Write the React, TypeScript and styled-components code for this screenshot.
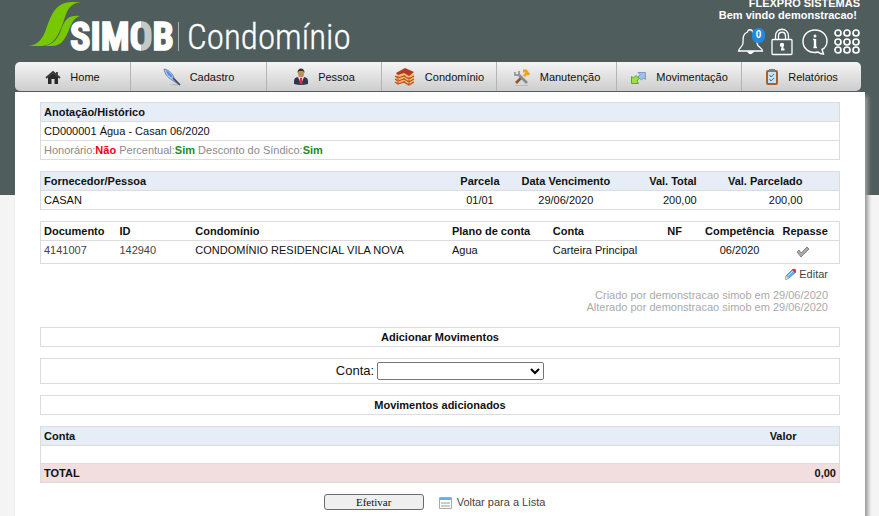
import React from "react";
import styled, { createGlobalStyle } from "styled-components";

const GlobalStyle = createGlobalStyle`
  * { box-sizing: border-box; }
  body {
    margin: 0;
    background: #f4f4f4 linear-gradient(#4f5d5d, #4f5d5d) 0 0 / 100% 195px no-repeat;
    color: #111;
    font: 11px/12px "Liberation Sans", Arial, sans-serif;
  }
  a { color: #444; text-decoration: none; }
`;

const Page = styled.div`
  min-width: 780px;
  padding: 0 14px 0 15px;
`;

const Header = styled.header`
  display: flex;
  justify-content: space-between;
  align-items: flex-end;
  height: 62px;
  padding: 0 5px 6px 12px;
  overflow: hidden;
`;

const LogoLink = styled.a`
  display: block;
  height: 56px;
`;

const Account = styled.div`
  display: flex;
  flex-direction: column;
  align-items: flex-end;
  gap: 7px;
  color: #fff;
  font-weight: bold;
`;

const Greeting = styled.div`
  text-align: right;
  white-space: pre;
`;

const Tools = styled.div`
  display: flex;
  gap: 5px;
`;

const ToolButton = styled.button`
  position: relative;
  display: block;
  width: 27px;
  height: 28px;
  padding: 0;
  border: 0;
  background: none;
  color: #fff;
  cursor: pointer;
`;

const Badge = styled.span`
  position: absolute;
  top: 0;
  right: -1px;
  width: 13px;
  height: 15px;
  border-radius: 6px;
  background: #2389dc;
  font: bold 10px/14px "Liberation Sans", Arial, sans-serif;
  text-align: center;
`;

const Nav = styled.nav`
  display: grid;
  grid-template-columns: 115fr 136fr 115fr 115fr 120fr 125fr 120fr;
  height: 29px;
  margin: 0 4px 1px 0;
  border-radius: 5px;
  background: linear-gradient(#f5f5f5, #cdcdcd);
`;

const NavItem = styled.a`
  display: flex;
  align-items: center;
  justify-content: center;
  gap: 9px;
  color: #111;
  & + & { border-left: 1px solid #b5b5b5; }
`;

const Main = styled.main`
  min-height: 440px;
  padding: 10px 25px;
  background: #fff;
  box-shadow: 3px 4px 4px #999;
`;

const Table = styled.table`
  width: 100%;
  margin-bottom: 11px;
  border: 1px solid #dcdcdc;
  border-collapse: collapse;
  table-layout: fixed;
`;

type Align = "left" | "center" | "right";

const Row = styled.tr<{ $tone?: "blue" | "pink" }>`
  border: 1px solid #dcdcdc;
  background: ${(p) => (p.$tone === "blue" ? "#e6edf6" : p.$tone === "pink" ? "#f2dede" : "#fff")};
`;

const Th = styled.th<{ $align?: Align }>`
  padding: 3px;
  text-align: ${(p) => p.$align ?? "left"};
  white-space: nowrap;
`;

const Td = styled.td<{ $align?: Align; $muted?: boolean }>`
  height: 19px;
  padding: 3px;
  text-align: ${(p) => p.$align ?? "left"};
  vertical-align: top;
  white-space: nowrap;
  color: ${(p) => (p.$muted ? "#8a8a8a" : "inherit")};
`;

const SpacerTd = styled.td`
  height: 18px;
  padding: 0;
`;

const Flag = styled.b<{ $on?: boolean }>`
  color: ${(p) => (p.$on ? "#228b22" : "#f00020")};
`;

const CheckTd = styled(Td)`
  height: 23px;
  padding: 5px 3px 0;
`;

const EntryTable = styled(Table)`
  margin-bottom: 4px;
`;

const EditBar = styled.div`
  display: flex;
  justify-content: flex-end;
  padding: 0 12px;
`;

const IconLink = styled.a<{ $gap: number }>`
  display: flex;
  align-items: center;
  gap: ${(p) => p.$gap}px;
`;

const Audit = styled.p`
  margin: 9px 12px 14px;
  color: #aaa;
  text-align: right;
`;

const SectionTitle = styled.h2`
  margin: 0 0 11px;
  padding: 4px;
  border: 1px solid #dcdcdc;
  font-size: 11px;
  line-height: 10px;
  text-align: center;
`;

const AccountField = styled.div`
  display: flex;
  align-items: center;
  justify-content: center;
  gap: 3px;
  height: 26px;
  margin-bottom: 11px;
  border: 1px solid #dcdcdc;
  font-size: 13px;
`;

const Select = styled.select`
  width: 167px;
  height: 18px;
  border: 1px solid #767676;
  border-radius: 2px;
  background: #fff;
`;

const Actions = styled.div`
  display: flex;
  justify-content: center;
  gap: 15px;
  padding-right: 11px;
`;

const SubmitButton = styled.button`
  width: 100px;
  height: 16px;
  padding: 0;
  border: 1px solid #6b6b6b;
  border-radius: 3px;
  background: #efefef;
  color: #111;
  font: 11px/14px "Liberation Serif", "Times New Roman", serif;
`;

function Logo() {
  return (
    <svg width="330" height="56" viewBox="27 0 330 56" role="img" aria-label="SIMOB Condomínio">
      <defs>
        <linearGradient id="ring" gradientUnits="userSpaceOnUse" x1="130" x2="152" y1="0" y2="0">
          <stop offset=".5" stopColor="#fff" />
          <stop offset=".5" stopColor="#c4c8c8" />
        </linearGradient>
      </defs>
      <path d="M28 46C38 45 42 39 45 32C50 20 53 2 72 2H81C67 4 67 13 63 23C58 36 54 45 42 46Z" fill="#78c800" />
      <path d="M45 46C54 44 58 38 61 30C65 19 69 15 80 16C73 18 71 25 68 32C64 41 60 46 52 46Z" fill="#78c800" />
      <text x="70" y="50" fill="#fff" stroke="#fff" strokeWidth="1.500" fontFamily="Roboto Condensed, Liberation Sans, sans-serif" fontWeight="700" fontSize="38">
        SIM<tspan fill="url(#ring)" stroke="url(#ring)">O</tspan>B
      </text>
      <path d="M178.500 22V51" stroke="#a9b0b0" />
      <text x="187" y="49" fill="#fff" fontFamily="Roboto Condensed, Roboto, sans-serif" fontWeight="300" fontSize="35" stroke="#fff" strokeWidth=".3">Condomínio</text>
    </svg>
  );
}

function BellIcon() {
  return (
    <svg width="27" height="28" viewBox="0 0 27 28" fill="none" stroke="#fff" strokeWidth="1.3">
      <path d="M10.500 4C10.500 1 15.500 1 15.500 4C20 6 20 10 20 15C20 19 25.500 20 25.500 23H1.500C1.500 20 6 19 6 15C6 9 6 6 10.500 4Z" />
      <path d="M11 24Q13 27 16 24Z" fill="#fff" />
    </svg>
  );
}

function LockIcon() {
  return (
    <svg width="27" height="28" viewBox="0 0 27 28" fill="none" stroke="#fff" strokeWidth="1.3">
      <rect x="3" y="11.500" width="20" height="15" rx="1" />
      <path d="M6.500 11V8C6.500-1 19.500-1 19.500 8V11M9.500 11V8C9.500 3 16.500 3 16.500 8V11" />
      <circle cx="13" cy="17" r="1.500" fill="#fff" />
      <path d="M13.500 18V22M12 21.500H15.500" strokeWidth="1.800" />
    </svg>
  );
}

function InfoIcon() {
  return (
    <svg width="27" height="28" viewBox="0 0 27 28" fill="none" stroke="#fff" strokeWidth="1.400">
      <path d="M17 24C9 26 2 21 2 13.500C2 7 7 2 14 2C21 2 26 7 26 13C26 17 24 20 21 21.500L22.500 26Q19 26 17 24Z" />
      <circle cx="14" cy="8" r="1.500" fill="#fff" stroke="none" />
      <path d="M14 11V20" strokeWidth="2.400" />
      <path d="M12 11.500H14M12.500 19.500H16" />
    </svg>
  );
}

function GridIcon() {
  return (
    <svg width="27" height="28" viewBox="0 0 27 28" fill="none" stroke="#fff" strokeWidth="1.700">
      {[5, 14, 22].map((cy) => [5, 14, 23].map((cx) => <circle key={`${cx}-${cy}`} cx={cx} cy={cy} r="3" />))}
    </svg>
  );
}

function HomeIcon() {
  return (
    <svg width="16" height="20" viewBox="0 0 16 20">
      <path d="M3 10L8 6L13 10V17H9.500V12H6.500V17H3Z" fill="#292929" />
      <path d="M1 11L8 5L15 11M12 5V8" fill="none" stroke="#383838" strokeWidth="1.800" />
    </svg>
  );
}

function PenIcon() {
  return (
    <svg width="18" height="20" viewBox="0 0 18 20">
      <path d="M6 17L16 17L13 19Z" fill="#aaa" opacity=".6" />
      <path d="M1 2C6 3 10 7 11 11L17 18L9 13C4 10 2 7 1 2Z" fill="#b8cbe6" stroke="#6a82ab" />
      <path d="M3 3Q8 6 10 11Q4 9 3 3Z" fill="#4b8cf2" />
      <path d="M10 11L17 18" stroke="#3d4560" strokeWidth="1.500" />
    </svg>
  );
}

function PersonIcon() {
  return (
    <svg width="16" height="20" viewBox="0 0 16 20">
      <path d="M1 17V14Q1 10 6 10H10Q15 10 15 14V17Q8 19 1 17Z" fill="#32364d" />
      <path d="M5 10H11L8 17Z" fill="#e9eef5" />
      <path d="M7 11H9L9.500 17H6.500Z" fill="#e12a32" />
      <ellipse cx="8" cy="6.500" rx="3" ry="4" fill="#c38c5b" />
      <path d="M4.500 6C4 0 12 0 11.500 6L10 4H6Z" fill="#3e3029" />
    </svg>
  );
}

function BuildingIcon() {
  return (
    <svg width="22" height="22" viewBox="0 0 22 22">
      <path d="M2 8L11 4L20 8V17L14 20L9 17L2 18Z" fill="#efc272" />
      <path d="M2 7L11 2L20 6L15 10L10 7L4 9Z" fill="#b23a20" />
      <path d="M1 10L4 12L10 10L15 13L20 10M1 13L4 15L10 13L15 16L20 13M1 16L4 18L10 16L15 19L20 16" fill="none" stroke="#c2502c" strokeWidth="1.300" />
      <path d="M4 10V18M10 9V18M15 11V20" stroke="#8e4a21" strokeDasharray="1 2" />
    </svg>
  );
}

function ToolsIcon() {
  return (
    <svg width="18" height="20" viewBox="0 0 18 20" fill="none">
      <path d="M2 18.500H15" stroke="#bbb" />
      <path d="M3 16L9 10" stroke="#8b562c" strokeWidth="2.600" />
      <path d="M5 7L14 16" stroke="#8b8b8b" strokeWidth="2.600" />
      <path d="M2 5V8H6V4" stroke="#999" strokeWidth="1.800" />
      <path d="M10 4H13L16 8M11 9L14 6" stroke="#efa31d" strokeWidth="2.800" />
    </svg>
  );
}

function TransferIcon() {
  return (
    <svg width="17" height="20" viewBox="0 0 17 20">
      <path d="M8 5.500H15.500V12.500L13.500 11L11.500 13L8 10L10 7.500Z" fill="#a4bdea" stroke="#7d98d2" />
      <path d="M1.500 9.500L3.500 11L6 8.500L9 11.500L7 14L8.500 16.500H1.500Z" fill="#9be33f" stroke="#5ca62c" />
    </svg>
  );
}

function ClipboardIcon() {
  return (
    <svg width="14" height="20" viewBox="0 0 14 20">
      <rect x="2" y="4" width="10" height="13" rx="1" fill="#c5e2f4" stroke="#a85f29" strokeWidth="2" />
      <path d="M4 2H10V5H4Z" fill="#758281" />
      <path d="M4.500 8L6 10L9 7M4.500 12L6 14L9 11" fill="none" stroke="#566c7b" />
    </svg>
  );
}

function CheckIcon() {
  return (
    <svg width="14" height="12" viewBox="0 0 14 12" aria-label="Sim" role="img">
      <path d="M1 6L3 4L5 7L11 1L13 3L5 11Z" fill="#aaa" stroke="#888" />
    </svg>
  );
}

function PencilIcon() {
  return (
    <svg width="12" height="12" viewBox="0 0 12 12">
      <path d="M1 8L8 1L11 4L4 10L0 12Z" fill="#66aee6" stroke="#4774a4" strokeWidth=".7" />
      <path d="M7 2L8 1Q10 0 11 2Q12 3 10 5Z" fill="#d93642" />
      <path d="M1 8L4 10L0 12Z" fill="#d7d7d7" />
      <path d="M3 8L8 3" stroke="#bde4ff" />
    </svg>
  );
}

function ListIcon() {
  return (
    <svg width="13" height="14" viewBox="0 0 13 14">
      <path d="M.5 2.500H12.500V13.500H.5Z" fill="#fff" stroke="#aaa" />
      <path d="M1 3H12V5H1Z" fill="#62b2e5" />
      <path d="M2 7H11V9H2ZM2 10H11V12H2Z" fill="#ccc" />
    </svg>
  );
}

const sections = [
  { label: "Home", Icon: HomeIcon },
  { label: "Cadastro", Icon: PenIcon },
  { label: "Pessoa", Icon: PersonIcon },
  { label: "Condomínio", Icon: BuildingIcon },
  { label: "Manutenção", Icon: ToolsIcon },
  { label: "Movimentação", Icon: TransferIcon },
  { label: "Relatórios", Icon: ClipboardIcon },
];

const Col = styled.col<{ $share?: number }>`
  width: ${(p) => (p.$share ? `${p.$share}%` : "auto")};
`;

function Columns({ shares }: { shares: number[] }) {
  return (
    <colgroup>
      {shares.map((share, i) => <Col key={i} $share={share} />)}
      <Col />
    </colgroup>
  );
}

export default function App() {
  return (
    <Page>
      <GlobalStyle />
      <Header>
        <LogoLink href="#"><Logo /></LogoLink>
        <Account>
          <Greeting>{"FLEXPRO SISTEMAS\nBem vindo demonstracao! "}</Greeting>
          <Tools>
            <ToolButton aria-label="Notificações"><BellIcon /><Badge>0</Badge></ToolButton>
            <ToolButton aria-label="Senha"><LockIcon /></ToolButton>
            <ToolButton aria-label="Informações"><InfoIcon /></ToolButton>
            <ToolButton aria-label="Aplicativos"><GridIcon /></ToolButton>
          </Tools>
        </Account>
      </Header>

      <Nav>
        {sections.map(({ label, Icon }) => (
          <NavItem href="#" key={label}><Icon />{label}</NavItem>
        ))}
      </Nav>

      <Main>
        <Table>
          <thead><Row $tone="blue"><Th>Anotação/Histórico</Th></Row></thead>
          <tbody>
            <Row><Td>CD000001 Água - Casan 06/2020</Td></Row>
            <Row>
              <Td $muted>
                Honorário:<Flag>Não</Flag> Percentual:<Flag $on>Sim</Flag> Desconto do Síndico:<Flag $on>Sim</Flag>
              </Td>
            </Row>
          </tbody>
        </Table>

        <Table>
          <Columns shares={[52, 6, 15.5, 9, 13.25]} />
          <thead>
            <Row $tone="blue">
              <Th>Fornecedor/Pessoa</Th>
              <Th $align="center">Parcela</Th>
              <Th $align="center">Data Vencimento</Th>
              <Th $align="right">Val. Total</Th>
              <Th $align="right">Val. Parcelado</Th>
              <Th />
            </Row>
          </thead>
          <tbody>
            <Row>
              <Td>CASAN</Td>
              <Td $align="center">01/01</Td>
              <Td $align="center">29/06/2020</Td>
              <Td $align="right">200,00</Td>
              <Td $align="right">200,00</Td>
              <Td />
            </Row>
          </tbody>
        </Table>

        <EntryTable>
          <Columns shares={[9.5, 9.5, 32.125, 12.625, 12.5, 6.25, 10, 6]} />
          <thead>
            <Row>
              <Th>Documento</Th>
              <Th>ID</Th>
              <Th>Condomínio</Th>
              <Th>Plano de conta</Th>
              <Th>Conta</Th>
              <Th $align="center">NF</Th>
              <Th $align="center">Competência</Th>
              <Th $align="center">Repasse</Th>
              <Th />
            </Row>
          </thead>
          <tbody>
            <Row>
              <Td><a href="#">4141007</a></Td>
              <Td><a href="#">142940</a></Td>
              <Td>CONDOMÍNIO RESIDENCIAL VILA NOVA</Td>
              <Td>Agua</Td>
              <Td>Carteira Principal</Td>
              <Td />
              <Td $align="center">06/2020</Td>
              <CheckTd $align="center"><CheckIcon /></CheckTd>
              <Td />
            </Row>
          </tbody>
        </EntryTable>

        <EditBar><IconLink href="#" $gap={2}><PencilIcon />Editar</IconLink></EditBar>
        <Audit>
          Criado por demonstracao simob em 29/06/2020<br />
          Alterado por demonstracao simob em 29/06/2020
        </Audit>

        <SectionTitle>Adicionar Movimentos</SectionTitle>
        <AccountField>
          <label htmlFor="conta">Conta:</label>
          <Select id="conta" defaultValue=""><option value="" /></Select>
        </AccountField>
        <SectionTitle>Movimentos adicionados</SectionTitle>

        <Table>
          <Columns shares={[85, 10]} />
          <thead>
            <Row $tone="blue"><Th>Conta</Th><Th $align="right">Valor</Th><Th /></Row>
          </thead>
          <tbody><Row><SpacerTd colSpan={3} /></Row></tbody>
          <tfoot>
            <Row $tone="pink"><Th>TOTAL</Th><Th $align="right" colSpan={2}>0,00</Th></Row>
          </tfoot>
        </Table>

        <Actions>
          <SubmitButton type="button">Efetivar</SubmitButton>
          <IconLink href="#" $gap={5}><ListIcon />Voltar para a Lista</IconLink>
        </Actions>
      </Main>
    </Page>
  );
}
